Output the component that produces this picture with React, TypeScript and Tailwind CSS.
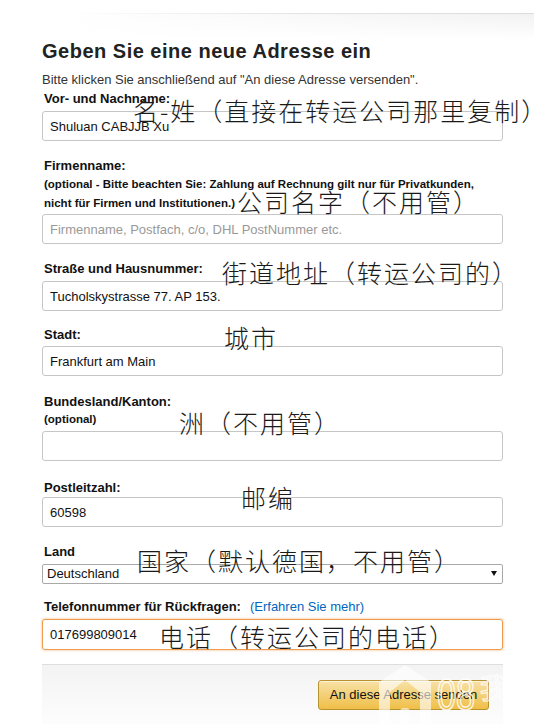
import React from "react";

function Label({ children, className = "" }: { children: React.ReactNode; className?: string }) {
  return (
    <div className={"pl-[2px] text-[13px] leading-[18px] font-bold text-[#111] " + className}>
      {children}
    </div>
  );
}

function Field({
  value,
  placeholder,
  className = "",
}: {
  value?: string;
  placeholder?: string;
  className?: string;
}) {
  return (
    <input
      readOnly
      defaultValue={value}
      placeholder={placeholder}
      className={
        "block w-full h-[30px] rounded-[3px] border px-[7px] py-0 text-[13px] text-[#111] placeholder:text-[#999] outline-none " +
        className
      }
    />
  );
}

function Note({ children, className = "" }: { children: React.ReactNode; className?: string }) {
  return (
    <div
      className={
        "absolute whitespace-nowrap text-[25px] leading-[25px] tracking-[2px] font-light text-[#1a1a1a] font-['Noto_Sans_CJK_SC',sans-serif] " +
        className
      }
    >
      {children}
    </div>
  );
}

function Watermark() {
  return (
    <svg
      className="absolute left-[376px] top-[663px] pointer-events-none"
      width="158"
      height="61"
      viewBox="0 0 158 61"
    >
      <path
        d="M29 2 L55 19 L55 61 L3 61 L3 19 Z M29 17 L14 29 L14 61 L44 61 L44 29 Z"
        fill="#ffffff"
        fillOpacity="0.62"
        fillRule="evenodd"
      />
      <rect x="24" y="45" width="10" height="16" rx="4" fill="#ffffff" fillOpacity="0.6" />
      <text
        x="61"
        y="47"
        fontSize="44"
        textLength="38"
        lengthAdjust="spacingAndGlyphs"
        fontFamily="Liberation Sans, Arial, sans-serif"
        fill="none"
        stroke="#ffffff"
        strokeOpacity="0.85"
        strokeWidth="1.6"
      >
        08
      </text>
      <text
        x="104"
        y="36"
        fontSize="28"
        fontFamily="Noto Sans CJK SC, sans-serif"
        fill="none"
        stroke="#ffffff"
        strokeOpacity="0.8"
        strokeWidth="1.2"
      >
        我
      </text>
    </svg>
  );
}

export default function App() {
  return (
    <div className="relative w-[534px] h-[724px] overflow-hidden bg-white font-['Liberation_Sans',Arial,sans-serif] text-[#111]">
      {/* header strip */}
      <div className="h-[13px] bg-white" />
      <div className="h-[1px] bg-[linear-gradient(to_right,#ffffff_12%,#e4e4e4_55%,#dcdcdc)]" />
      <div className="h-[25px] bg-[linear-gradient(to_bottom,rgba(255,255,255,0),#ffffff),linear-gradient(to_right,#ffffff_12%,#f2f2f2)]" />

      <div className="ml-[42px] w-[461px]">
        <h1 className="text-[20px] leading-[24px] font-bold tracking-[0.5px] text-[#222]">
          Geben Sie eine neue Adresse ein
        </h1>
        <p className="mt-[9px] text-[13px] leading-[16px] text-[#333]">
          Bitte klicken Sie anschließend auf "An diese Adresse versenden".
        </p>

        <Label className="mt-[2px]">Vor- und Nachname:</Label>
        <Field className="mt-[3px] border-[#c6c6c6]" value="Shuluan CABJJB Xu" />

        <Label className="mt-[16px]">Firmenname:</Label>
        <div className="pl-[2px] text-[11.5px] leading-[19px] font-bold text-[#111]">
          (optional - Bitte beachten Sie: Zahlung auf Rechnung gilt nur für Privatkunden,
          <br />
          nicht für Firmen und Institutionen.)
        </div>
        <Field
          className="mt-[1px] border-[#c6c6c6]"
          placeholder="Firmenname, Postfach, c/o, DHL PostNummer etc."
        />

        <Label className="mt-[16px]">Straße und Hausnummer:</Label>
        <Field className="mt-[3px] border-[#c6c6c6]" value="Tucholskystrasse 77. AP 153." />

        <Label className="mt-[15px]">Stadt:</Label>
        <Field className="mt-[2px] border-[#c6c6c6]" value="Frankfurt am Main" />

        <Label className="mt-[17px]">Bundesland/Kanton:</Label>
        <div className="pl-[2px] text-[11.5px] leading-[17px] font-bold text-[#111]">(optional)</div>
        <Field className="mt-[3px] border-[#c6c6c6]" />

        <Label className="mt-[18px]">Postleitzahl:</Label>
        <Field className="border-[#c6c6c6]" value="60598" />

        <Label className="mt-[16px]">Land</Label>
        <div className="relative mt-[3px]">
          <select
            defaultValue="DE"
            className="block w-full h-[20px] appearance-none rounded-[2px] border border-[#a9a9a9] bg-white pl-[4px] pr-[16px] py-0 text-[13px] leading-[18px] text-[#111] outline-none"
          >
            <option value="DE">Deutschland</option>
          </select>
          <svg
            className="absolute right-[6px] top-[7px] pointer-events-none"
            width="6"
            height="5"
            viewBox="0 0 6 5"
          >
            <path d="M0 0 H6 L3 5 Z" fill="#111" />
          </svg>
        </div>

        <Label className="mt-[14px]">
          Telefonnummer für Rückfragen:
          <span className="ml-[9px] font-normal text-[#0066c0]">(Erfahren Sie mehr)</span>
        </Label>
        <Field
          className="mt-[3px] h-[31px] border-[#ec9b4f] shadow-[0_0_2px_1px_rgba(228,121,17,0.25)]"
          value="017699809014"
        />

        <div className="mt-[14px] h-[61px] border-t border-[#dedede] bg-[linear-gradient(to_bottom,#f3f3f3,#fdfdfd)] flex justify-end pt-[15px] pr-[14px]">
          <button className="w-[171px] h-[30px] rounded-[3px] border border-[#b99230] bg-[linear-gradient(to_bottom,#f8e1a7,#efbf47)] text-[13px] text-[#111] shadow-[inset_0_1px_0_rgba(255,255,255,0.6)]">
            An diese Adresse senden
          </button>
        </div>
      </div>

      {/* handwritten-style annotations */}
      <Note className="left-[133px] top-[98px]">名-姓（直接在转运公司那里复制）</Note>
      <Note className="left-[237px] top-[189px]">公司名字（不用管）</Note>
      <Note className="left-[222px] top-[260px]">街道地址（转运公司的）</Note>
      <Note className="left-[224px] top-[325px]">城市</Note>
      <Note className="left-[179px] top-[410px]">洲（不用管）</Note>
      <Note className="left-[241px] top-[485px]">邮编</Note>
      <Note className="left-[137px] top-[548px]">国家（默认德国，不用管）</Note>
      <Note className="left-[159px] top-[624px]">电话（转运公司的电话）</Note>

      <Watermark />
    </div>
  );
}
